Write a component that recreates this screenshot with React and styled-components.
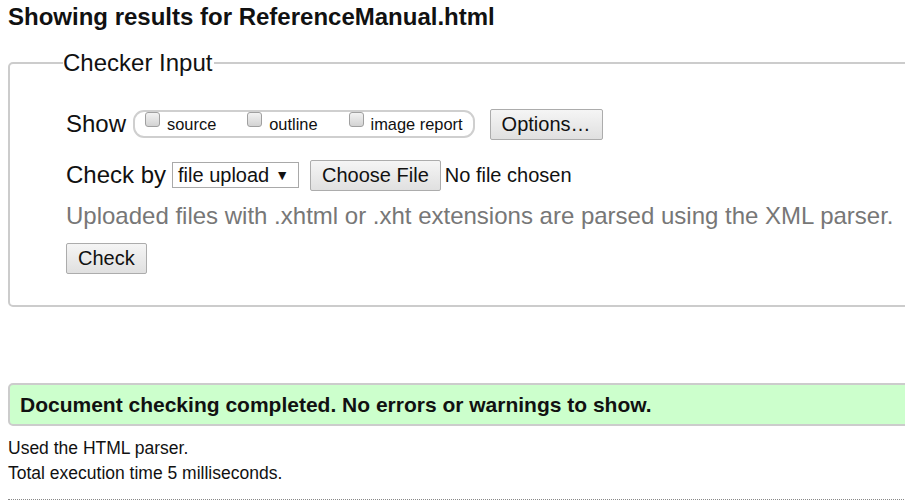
import React from 'react';
import styled, {createGlobalStyle} from 'styled-components';

const GlobalStyle = createGlobalStyle`
  html, body {
    margin: 0;
    padding: 0;
    background: #fff;
    overflow: hidden;
  }
  body {
    font-family: "Liberation Sans", Arial, sans-serif;
    color: #000;
  }
`

const Page = styled.div`
  width: 980px;
  padding: 0 8px;
`

const Title = styled.h2`
  margin: 0;
  padding-top: 3px;
  font-size: 24px;
  line-height: 28px;
  font-weight: bold;
  color: #111;
`

const CheckerFieldset = styled.fieldset`
  margin: 18px 0 0 0;
  padding: 0 0 31px 56px;
  border: 2px solid #cccccc;
  border-radius: 5px;
  min-width: 0;
`

const Legend = styled.legend`
  margin-left: -3px;
  padding: 0 2px 0 0;
  font-size: 24px;
  line-height: 28px;
  color: #111;
`

const Row = styled.div`
  display: flex;
  align-items: center;
  height: ${p => p.$h || 32}px;
  margin-top: ${p => p.$top || 0}px;
`

const Label = styled.span`
  font-size: 24px;
  line-height: 28px;
  color: #111;
  margin-right: ${p => p.$gap || 6}px;
`

const Pill = styled.div`
  display: flex;
  align-items: flex-start;
  height: 28px;
  box-sizing: border-box;
  padding: 0 10px 0 10px;
  border: 2px solid #cfcfcf;
  border-radius: 11px;
  margin-right: 15px;
`

const Option = styled.label`
  display: flex;
  align-items: flex-start;
  margin-left: ${p => p.$first ? 0 : 31}px;
  font-size: 16.4px;
  color: #111;
  span {
    margin-top: 2px;
    line-height: 20px;
  }
`

const Box = styled.i`
  display: block;
  width: 13px;
  height: 13px;
  margin: 0 7px 0 0;
  border: 1px solid #a0a0a0;
  border-radius: 3px;
  background: linear-gradient(#f2f2f2, #d3d3d3);
`

const Button = styled.button`
  height: ${p => p.$h || 31}px;
  padding: 0 ${p => p.$pad || 12}px;
  border: 1px solid #acacac;
  border-radius: 2px;
  background: linear-gradient(#f5f5f5, #e0e0e0);
  font-family: "Liberation Sans", Arial, sans-serif;
  font-size: 20px;
  color: #111;
  margin-right: ${p => p.$gap || 0}px;
`

const Select = styled.div`
  display: flex;
  align-items: center;
  justify-content: space-between;
  width: 127px;
  height: 26px;
  box-sizing: border-box;
  padding: 0 9px 0 5px;
  border: 1px solid #a9a9a9;
  background: #fff;
  font-size: 20px;
  color: #111;
  margin-right: 11px;
  b {
    font-size: 14px;
    font-weight: normal;
  }
`

const FileName = styled.span`
  margin-left: 4px;
  font-size: 20px;
  color: #111;
`

const Hint = styled.p`
  margin: 11px 0 0 0;
  font-size: 24px;
  line-height: 28px;
  color: #777;
  white-space: nowrap;
`

const Success = styled.div`
  margin-top: 76px;
  height: 43px;
  box-sizing: border-box;
  display: flex;
  align-items: center;
  padding-left: 10px;
  border: 2px solid #cccccc;
  border-radius: 5px;
  background: #ccffcc;
  font-size: 21px;
  font-weight: bold;
  color: #111;
`

const Note = styled.p`
  margin: ${p => p.$top}px 0 0 0;
  font-size: 17.5px;
  line-height: 20px;
  color: #111;
`

const Rule = styled.hr`
  margin: 16px 0 0 0;
  border: 0;
  border-top: 1px dotted #888;
`

export default function App() {
  return (
    <>
      <GlobalStyle />
      <Page>
        <Title>Showing results for ReferenceManual.html</Title>
        <CheckerFieldset>
          <Legend>Checker Input</Legend>
          <Row $top={31}>
            <Label $gap={7}>Show</Label>
            <Pill>
              <Option $first><Box /><span>source</span></Option>
              <Option><Box /><span>outline</span></Option>
              <Option><Box /><span>image report</span></Option>
            </Pill>
            <Button $pad={11}>Options…</Button>
          </Row>
          <Row $top={19}>
            <Label>Check by</Label>
            <Select>file upload<b>▼</b></Select>
            <Button $pad={11}>Choose File</Button>
            <FileName>No file chosen</FileName>
          </Row>
          <Hint>Uploaded files with .xhtml or .xht extensions are parsed using the XML parser.</Hint>
          <Row $top={12}>
            <Button $pad={11}>Check</Button>
          </Row>
        </CheckerFieldset>
        <Success>Document checking completed. No errors or warnings to show.</Success>
        <Note $top={12}>Used the HTML parser.</Note>
        <Note $top={5}>Total execution time 5 milliseconds.</Note>
        <Rule />
      </Page>
    </>
  )
}
